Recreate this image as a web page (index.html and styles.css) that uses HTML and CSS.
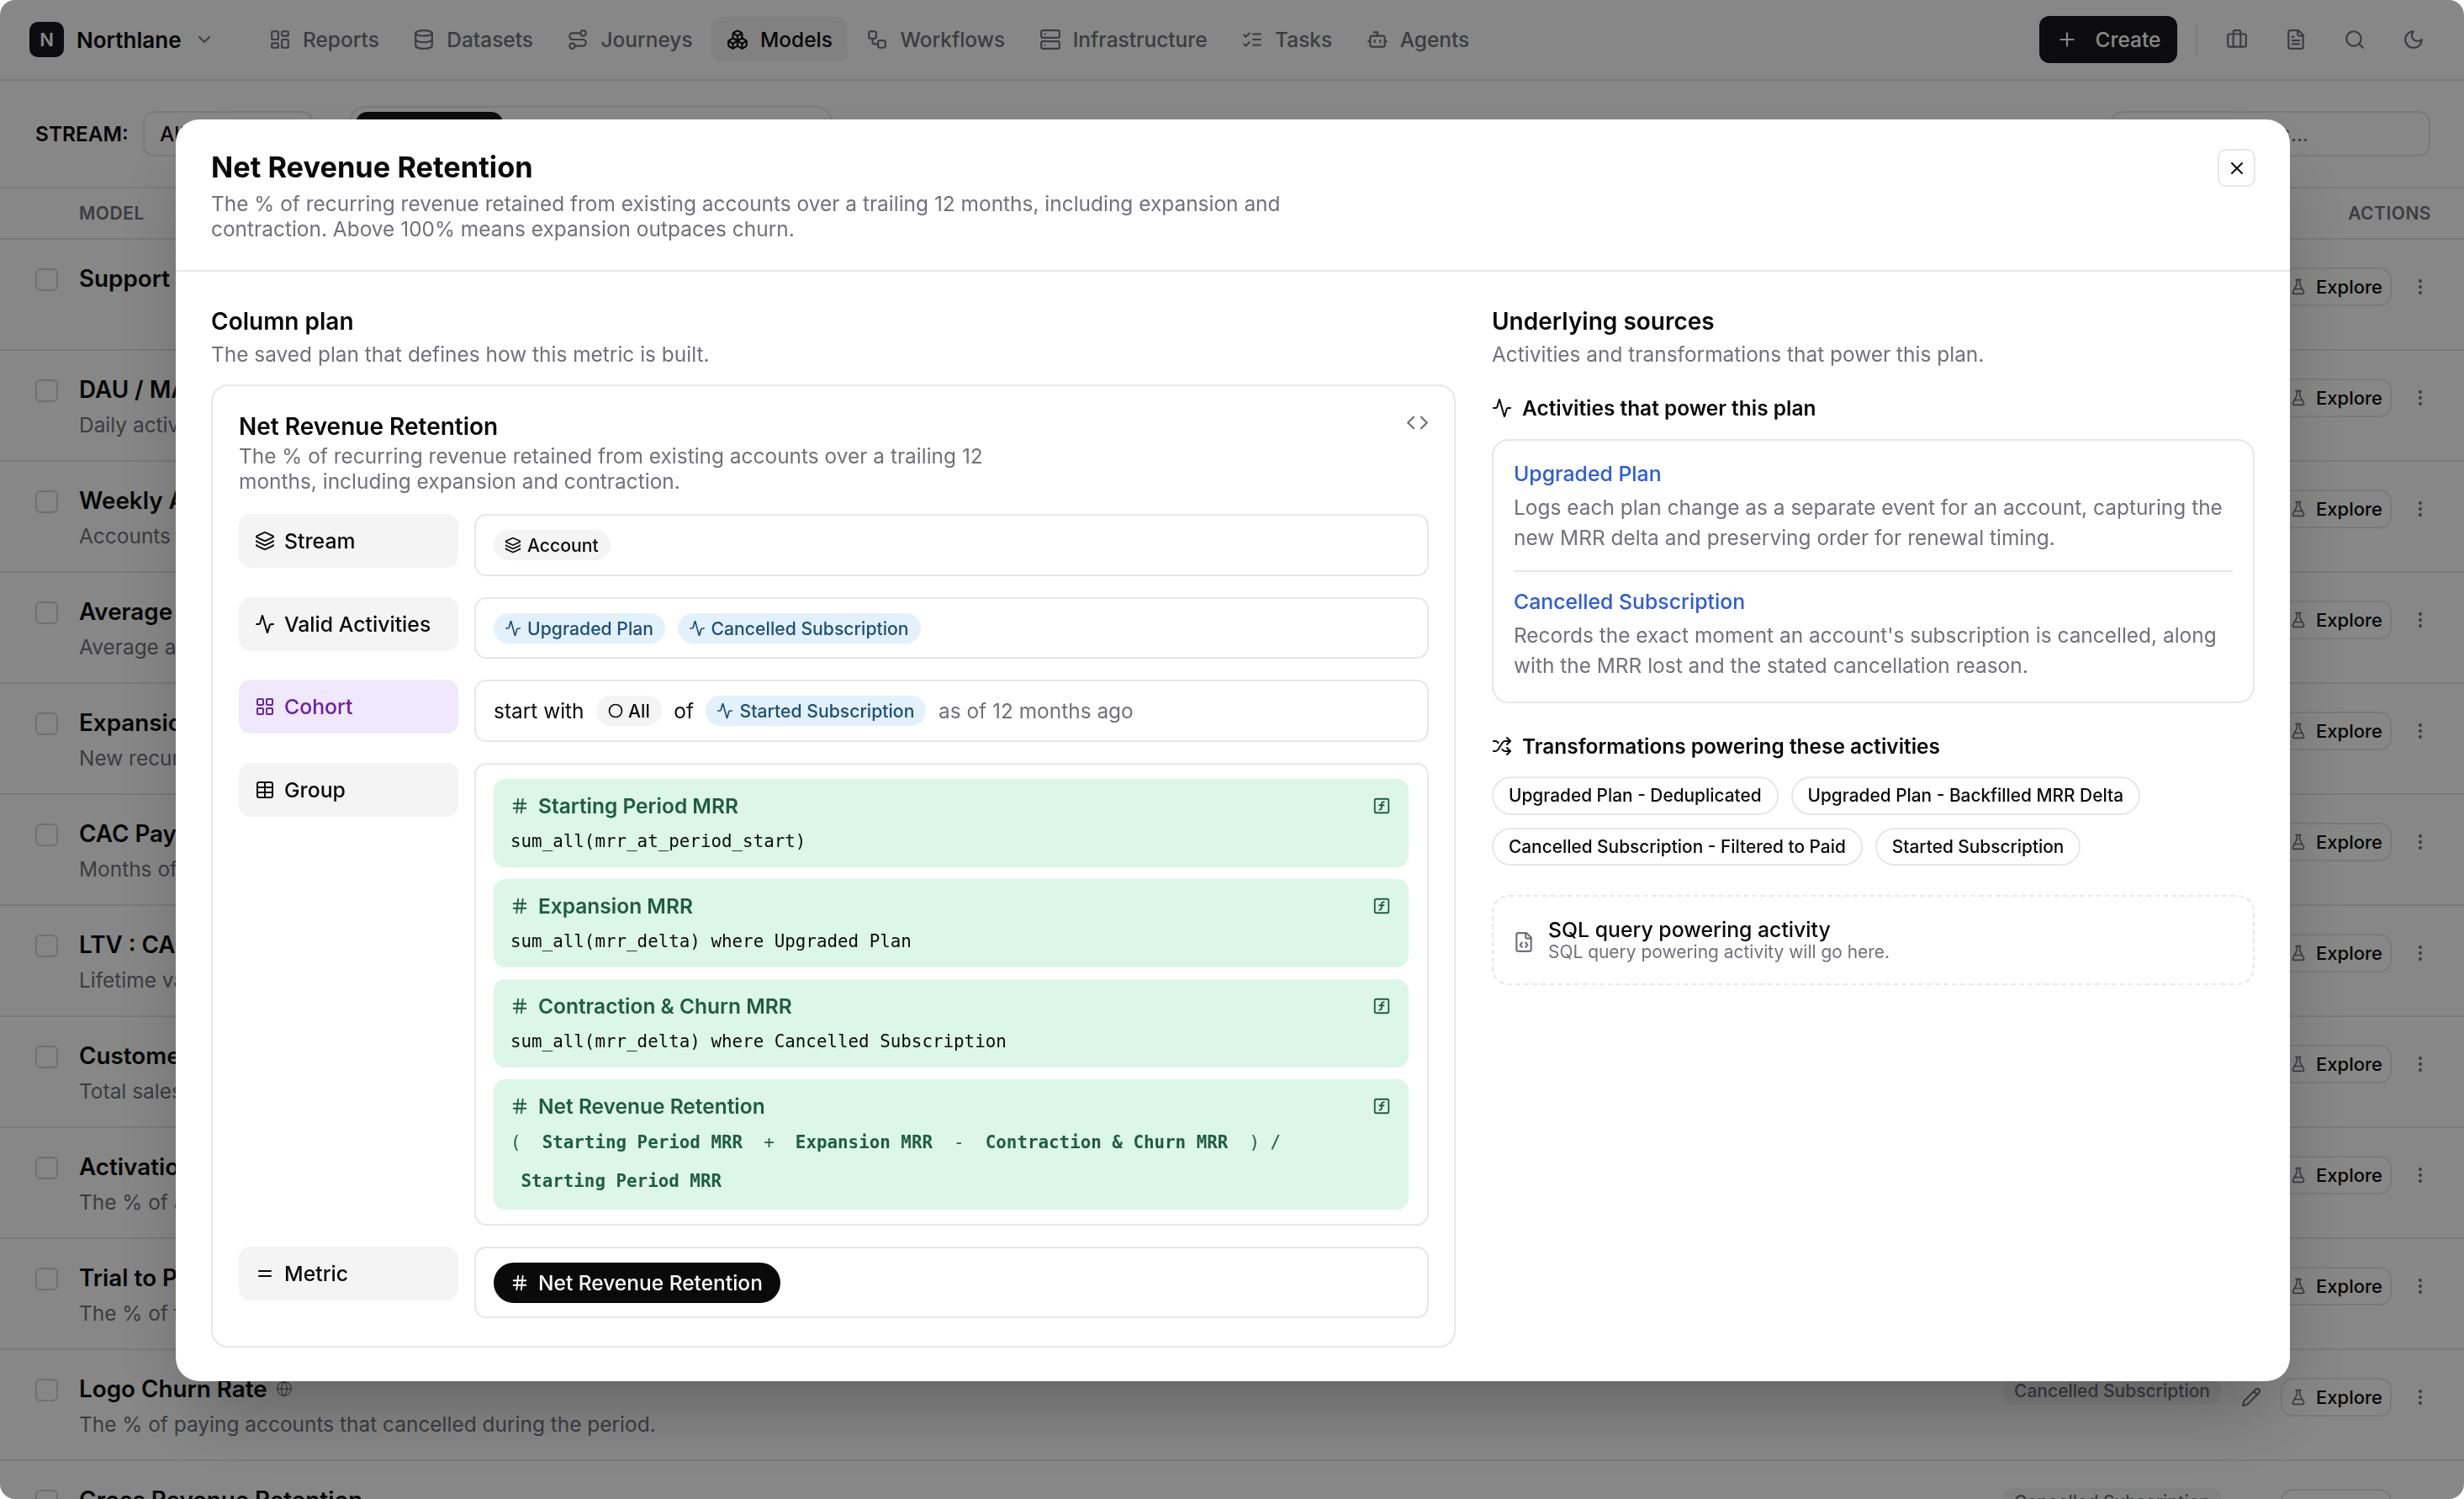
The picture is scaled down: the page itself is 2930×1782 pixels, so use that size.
FILE: index.html
```html
<!DOCTYPE html>
<html lang="en">
<head>
  <meta charset="UTF-8" />
  <meta name="viewport" content="width=device-width, initial-scale=1.0"/>
  <title>Northlane - Models</title>
  <link rel="stylesheet" href="styles.css">
</head>
<body>
  <svg class="sprite" aria-hidden="true">
    <symbol id="i-reports" viewBox="0 0 24 24"><rect width="7" height="9" x="3" y="3" rx="1"/><rect width="7" height="5" x="14" y="3" rx="1"/><rect width="7" height="9" x="14" y="12" rx="1"/><rect width="7" height="5" x="3" y="16" rx="1"/></symbol>
    <symbol id="i-grid" viewBox="0 0 24 24"><rect width="7" height="7" x="3" y="3" rx="1"/><rect width="7" height="7" x="14" y="3" rx="1"/><rect width="7" height="7" x="14" y="14" rx="1"/><rect width="7" height="7" x="3" y="14" rx="1"/></symbol>
    <symbol id="i-database" viewBox="0 0 24 24"><ellipse cx="12" cy="5" rx="9" ry="3"/><path d="M3 5V19A9 3 0 0 0 21 19V5"/><path d="M3 12A9 3 0 0 0 21 12"/></symbol>
    <symbol id="i-route" viewBox="0 0 24 24"><circle cx="6" cy="19" r="3"/><path d="M9 19h8.5a3.5 3.5 0 0 0 0-7h-11a3.5 3.5 0 0 1 0-7H15"/><circle cx="18" cy="5" r="3"/></symbol>
    <symbol id="i-boxes" viewBox="0 0 24 24"><path d="M2.97 12.92A2 2 0 0 0 2 14.63v3.24a2 2 0 0 0 .97 1.71l3 1.8a2 2 0 0 0 2.06 0L12 19v-5.5l-5-3-4.03 2.42Z"/><path d="m7 16.5-4.74-2.85"/><path d="m7 16.5 5-3"/><path d="M7 16.5v5.17"/><path d="M12 13.5V19l3.97 2.38a2 2 0 0 0 2.06 0l3-1.8a2 2 0 0 0 .97-1.71v-3.24a2 2 0 0 0-.97-1.71L17 10.5l-5 3Z"/><path d="m17 16.5-5-3"/><path d="m17 16.5 4.74-2.85"/><path d="M17 16.5v5.17"/><path d="M7.97 4.42A2 2 0 0 0 7 6.13v4.37l5 3 5-3V6.13a2 2 0 0 0-.97-1.71l-3-1.8a2 2 0 0 0-2.06 0l-3 1.8Z"/><path d="M12 8 7.26 5.15"/><path d="m12 8 4.74-2.85"/><path d="M12 13.5V8"/></symbol>
    <symbol id="i-workflow" viewBox="0 0 24 24"><rect width="8" height="8" x="3" y="3" rx="2"/><path d="M7 11v4a2 2 0 0 0 2 2h4"/><rect width="8" height="8" x="13" y="13" rx="2"/></symbol>
    <symbol id="i-server" viewBox="0 0 24 24"><rect width="20" height="8" x="2" y="2" rx="2"/><rect width="20" height="8" x="2" y="14" rx="2"/><path d="M6 6h.01"/><path d="M6 18h.01"/></symbol>
    <symbol id="i-tasks" viewBox="0 0 24 24"><path d="m3 17 2 2 4-4"/><path d="m3 7 2 2 4-4"/><path d="M13 6h8"/><path d="M13 12h8"/><path d="M13 18h8"/></symbol>
    <symbol id="i-bot" viewBox="0 0 24 24"><path d="M12 8V4H8"/><rect width="16" height="12" x="4" y="8" rx="2"/><path d="M2 14h2"/><path d="M20 14h2"/><path d="M15 13v2"/><path d="M9 13v2"/></symbol>
    <symbol id="i-plus" viewBox="0 0 24 24"><path d="M5 12h14"/><path d="M12 5v14"/></symbol>
    <symbol id="i-briefcase" viewBox="0 0 24 24"><path d="M16 20V4a2 2 0 0 0-2-2h-4a2 2 0 0 0-2 2v16"/><rect width="20" height="14" x="2" y="6" rx="2"/></symbol>
    <symbol id="i-file" viewBox="0 0 24 24"><path d="M15 2H6a2 2 0 0 0-2 2v16a2 2 0 0 0 2 2h12a2 2 0 0 0 2-2V7Z"/><path d="M14 2v4a2 2 0 0 0 2 2h4"/><path d="M10 9H8"/><path d="M16 13H8"/><path d="M16 17H8"/></symbol>
    <symbol id="i-search" viewBox="0 0 24 24"><circle cx="11" cy="11" r="8"/><path d="m21 21-4.3-4.3"/></symbol>
    <symbol id="i-moon" viewBox="0 0 24 24"><path d="M12 3a6 6 0 0 0 9 9 9 9 0 1 1-9-9Z"/></symbol>
    <symbol id="i-chevron" viewBox="0 0 24 24"><path d="m6 9 6 6 6-6"/></symbol>
    <symbol id="i-x" viewBox="0 0 24 24"><path d="M18 6 6 18"/><path d="m6 6 12 12"/></symbol>
    <symbol id="i-code" viewBox="0 0 24 24"><path d="m16 18 6-6-6-6"/><path d="m8 6-6 6 6 6"/></symbol>
    <symbol id="i-layers" viewBox="0 0 24 24"><path d="M12.83 2.18a2 2 0 0 0-1.66 0L2.6 6.08a1 1 0 0 0 0 1.83l8.58 3.91a2 2 0 0 0 1.66 0l8.58-3.9a1 1 0 0 0 0-1.83Z"/><path d="M2 12a1 1 0 0 0 .58.91l8.6 3.91a2 2 0 0 0 1.65 0l8.58-3.9A1 1 0 0 0 22 12"/><path d="M2 17a1 1 0 0 0 .58.91l8.6 3.91a2 2 0 0 0 1.65 0l8.58-3.9A1 1 0 0 0 22 17"/></symbol>
    <symbol id="i-activity" viewBox="0 0 24 24"><path d="M22 12h-2.48a2 2 0 0 0-1.93 1.46l-2.35 8.36a.25.25 0 0 1-.48 0L9.24 2.18a.25.25 0 0 0-.48 0l-2.35 8.36A2 2 0 0 1 4.49 12H2"/></symbol>
    <symbol id="i-table" viewBox="0 0 24 24"><path d="M12 3v18"/><rect width="18" height="18" x="3" y="3" rx="2"/><path d="M3 9h18"/><path d="M3 15h18"/></symbol>
    <symbol id="i-equal" viewBox="0 0 24 24"><path d="M5 9h14"/><path d="M5 15h14"/></symbol>
    <symbol id="i-hash" viewBox="0 0 24 24"><path d="M4 9h16"/><path d="M4 15h16"/><path d="M10 3 8 21"/><path d="M16 3l-2 18"/></symbol>
    <symbol id="i-function" viewBox="0 0 24 24"><rect width="18" height="18" x="3" y="3" rx="2"/><path d="M9 17c2 0 2.8-1 2.8-2.8V10c0-2 1-3.3 3.2-3"/><path d="M9 11.2h5.7"/></symbol>
    <symbol id="i-shuffle" viewBox="0 0 24 24"><path d="m18 14 4 4-4 4"/><path d="m18 2 4 4-4 4"/><path d="M2 18h1.973a4 4 0 0 0 3.3-1.7l5.454-8.6a4 4 0 0 1 3.3-1.7H22"/><path d="M2 6h1.972a4 4 0 0 1 3.398 1.89l.194.31"/><path d="M22 18h-6.041a4 4 0 0 1-3.3-1.8l-.359-.45"/></symbol>
    <symbol id="i-file-code" viewBox="0 0 24 24"><path d="M10 12.5 8 15l2 2.5"/><path d="m14 12.5 2 2.5-2 2.5"/><path d="M14 2v4a2 2 0 0 0 2 2h4"/><path d="M15 2H6a2 2 0 0 0-2 2v16a2 2 0 0 0 2 2h12a2 2 0 0 0 2-2V7z"/></symbol>
    <symbol id="i-circle" viewBox="0 0 24 24"><circle cx="12" cy="12" r="9"/></symbol>
    <symbol id="i-flask" viewBox="0 0 24 24"><path d="M14 2v6a2 2 0 0 0 .245.96l5.51 10.08A2 2 0 0 1 18 22H6a2 2 0 0 1-1.755-2.96l5.51-10.08A2 2 0 0 0 10 8V2"/><path d="M6.453 15h11.094"/><path d="M8.5 2h7"/></symbol>
    <symbol id="i-more" viewBox="0 0 24 24"><circle cx="12" cy="12" r="1"/><circle cx="12" cy="5" r="1"/><circle cx="12" cy="19" r="1"/></symbol>
    <symbol id="i-pencil" viewBox="0 0 24 24"><path d="M21.174 6.812a1 1 0 0 0-3.986-3.987L3.842 16.174a2 2 0 0 0-.5.83l-1.321 4.352a.5.5 0 0 0 .623.622l4.353-1.32a2 2 0 0 0 .83-.497z"/><path d="m15 5 4 4"/></symbol>
    <symbol id="i-globe" viewBox="0 0 24 24"><circle cx="12" cy="12" r="10"/><path d="M12 2a14.5 14.5 0 0 0 0 20 14.5 14.5 0 0 0 0-20"/><path d="M2 12h20"/></symbol>
  </svg>

  <div class="app">
    <header class="topbar">
      <div class="brand">
        <span class="brand-logo">N</span>
        <span class="brand-name">Northlane</span>
        <svg class="icon icon-sm brand-caret"><use href="#i-chevron"/></svg>
      </div>
      <nav class="nav">
        <a class="nav-item"><svg class="icon"><use href="#i-reports"/></svg>Reports</a>
        <a class="nav-item"><svg class="icon"><use href="#i-database"/></svg>Datasets</a>
        <a class="nav-item"><svg class="icon"><use href="#i-route"/></svg>Journeys</a>
        <a class="nav-item active"><svg class="icon"><use href="#i-boxes"/></svg>Models</a>
        <a class="nav-item"><svg class="icon"><use href="#i-workflow"/></svg>Workflows</a>
        <a class="nav-item"><svg class="icon"><use href="#i-server"/></svg>Infrastructure</a>
        <a class="nav-item"><svg class="icon"><use href="#i-tasks"/></svg>Tasks</a>
        <a class="nav-item"><svg class="icon"><use href="#i-bot"/></svg>Agents</a>
      </nav>
      <div class="topbar-right">
        <button class="create-btn"><svg class="icon"><use href="#i-plus"/></svg>Create</button>
        <span class="topbar-divider"></span>
        <svg class="icon top-icon"><use href="#i-briefcase"/></svg>
        <svg class="icon top-icon"><use href="#i-file"/></svg>
        <svg class="icon top-icon"><use href="#i-search"/></svg>
        <svg class="icon top-icon"><use href="#i-moon"/></svg>
      </div>
    </header>

    <div class="toolbar">
      <span class="stream-label">STREAM:</span>
      <div class="stream-select">All streams</div>
      <div class="segments">
        <span class="segment active">All models</span>
      </div>
      <div class="search">Search metrics...</div>
    </div>

    <div class="table-head">
      <span>MODEL</span>
      <span>ACTIONS</span>
    </div>

    <div class="table-row">
      <span class="check"></span>
      <div class="row-main"><div class="row-title">Support Tickets</div></div>
      <div class="row-actions"><button class="explore"><svg class="icon"><use href="#i-flask"/></svg>Explore</button><svg class="icon more"><use href="#i-more"/></svg></div>
    </div>
    <div class="table-row">
      <span class="check"></span>
      <div class="row-main"><div class="row-title">DAU / MAU</div><div class="row-sub">Daily active accounts</div></div>
      <div class="row-actions"><button class="explore"><svg class="icon"><use href="#i-flask"/></svg>Explore</button><svg class="icon more"><use href="#i-more"/></svg></div>
    </div>
    <div class="table-row">
      <span class="check"></span>
      <div class="row-main"><div class="row-title">Weekly Active</div><div class="row-sub">Accounts active each week</div></div>
      <div class="row-actions"><button class="explore"><svg class="icon"><use href="#i-flask"/></svg>Explore</button><svg class="icon more"><use href="#i-more"/></svg></div>
    </div>
    <div class="table-row">
      <span class="check"></span>
      <div class="row-main"><div class="row-title">Average Revenue</div><div class="row-sub">Average account revenue</div></div>
      <div class="row-actions"><button class="explore"><svg class="icon"><use href="#i-flask"/></svg>Explore</button><svg class="icon more"><use href="#i-more"/></svg></div>
    </div>
    <div class="table-row">
      <span class="check"></span>
      <div class="row-main"><div class="row-title">Expansion MRR</div><div class="row-sub">New recurring revenue</div></div>
      <div class="row-actions"><button class="explore"><svg class="icon"><use href="#i-flask"/></svg>Explore</button><svg class="icon more"><use href="#i-more"/></svg></div>
    </div>
    <div class="table-row">
      <span class="check"></span>
      <div class="row-main"><div class="row-title">CAC Payback</div><div class="row-sub">Months of revenue</div></div>
      <div class="row-actions"><button class="explore"><svg class="icon"><use href="#i-flask"/></svg>Explore</button><svg class="icon more"><use href="#i-more"/></svg></div>
    </div>
    <div class="table-row">
      <span class="check"></span>
      <div class="row-main"><div class="row-title">LTV : CAC</div><div class="row-sub">Lifetime value</div></div>
      <div class="row-actions"><button class="explore"><svg class="icon"><use href="#i-flask"/></svg>Explore</button><svg class="icon more"><use href="#i-more"/></svg></div>
    </div>
    <div class="table-row">
      <span class="check"></span>
      <div class="row-main"><div class="row-title">Customer Sales</div><div class="row-sub">Total sales</div></div>
      <div class="row-actions"><button class="explore"><svg class="icon"><use href="#i-flask"/></svg>Explore</button><svg class="icon more"><use href="#i-more"/></svg></div>
    </div>
    <div class="table-row">
      <span class="check"></span>
      <div class="row-main"><div class="row-title">Activation Rate</div><div class="row-sub">The % of accounts</div></div>
      <div class="row-actions"><button class="explore"><svg class="icon"><use href="#i-flask"/></svg>Explore</button><svg class="icon more"><use href="#i-more"/></svg></div>
    </div>
    <div class="table-row">
      <span class="check"></span>
      <div class="row-main"><div class="row-title">Trial to Paid</div><div class="row-sub">The % of trials</div></div>
      <div class="row-actions"><span class="row-chip">Cancelled Subscription</span><svg class="icon pencil"><use href="#i-pencil"/></svg><button class="explore"><svg class="icon"><use href="#i-flask"/></svg>Explore</button><svg class="icon more"><use href="#i-more"/></svg></div>
    </div>
    <div class="table-row">
      <span class="check"></span>
      <div class="row-main"><div class="row-title">Logo Churn Rate <svg class="icon icon-xs globe"><use href="#i-globe"/></svg></div><div class="row-sub">The % of paying accounts that cancelled during the period.</div></div>
      <div class="row-actions"><span class="row-chip">Cancelled Subscription</span><svg class="icon pencil"><use href="#i-pencil"/></svg><button class="explore"><svg class="icon"><use href="#i-flask"/></svg>Explore</button><svg class="icon more"><use href="#i-more"/></svg></div>
    </div>
    <div class="table-row">
      <span class="check"></span>
      <div class="row-main"><div class="row-title">Gross Revenue Retention</div></div>
      <div class="row-actions"><span class="row-chip">Cancelled Subscription</span><svg class="icon pencil"><use href="#i-pencil"/></svg><button class="explore"><svg class="icon"><use href="#i-flask"/></svg>Explore</button><svg class="icon more"><use href="#i-more"/></svg></div>
    </div>
  </div>

  <div class="overlay">
    <div class="modal">
      <div class="modal-head">
        <div>
          <h2 class="modal-title">Net Revenue Retention</h2>
          <p class="modal-desc">The % of recurring revenue retained from existing accounts over a trailing 12 months, including expansion and contraction. Above 100% means expansion outpaces churn.</p>
        </div>
        <button class="close-btn"><svg class="icon icon-sm"><use href="#i-x"/></svg></button>
      </div>

      <div class="modal-body">
        <section>
          <h3 class="section-title">Column plan</h3>
          <p class="section-sub">The saved plan that defines how this metric is built.</p>

          <div class="plan-card">
            <div class="plan-head">
              <div>
                <div class="plan-title">Net Revenue Retention</div>
                <p class="plan-desc">The % of recurring revenue retained from existing accounts over a trailing 12 months, including expansion and contraction.</p>
              </div>
              <svg class="icon plan-code"><use href="#i-code"/></svg>
            </div>

            <div class="plan-grid">
              <div class="plan-label"><svg class="icon icon-sm"><use href="#i-layers"/></svg>Stream</div>
              <div class="plan-value">
                <span class="chip"><svg class="icon icon-xs"><use href="#i-layers"/></svg>Account</span>
              </div>

              <div class="plan-label"><svg class="icon icon-sm"><use href="#i-activity"/></svg>Valid Activities</div>
              <div class="plan-value">
                <span class="chip chip-blue"><svg class="icon icon-xs"><use href="#i-activity"/></svg>Upgraded Plan</span>
                <span class="chip chip-blue"><svg class="icon icon-xs"><use href="#i-activity"/></svg>Cancelled Subscription</span>
              </div>

              <div class="plan-label plan-label-cohort"><svg class="icon icon-sm"><use href="#i-grid"/></svg>Cohort</div>
              <div class="plan-value">
                <span>start with</span>
                <span class="chip chip-all"><svg class="icon icon-xs"><use href="#i-circle"/></svg>All</span>
                <span>of</span>
                <span class="chip chip-blue"><svg class="icon icon-xs"><use href="#i-activity"/></svg>Started Subscription</span>
                <span class="muted">as of 12 months ago</span>
              </div>

              <div class="plan-label"><svg class="icon icon-sm"><use href="#i-table"/></svg>Group</div>
              <div class="plan-value plan-value-stack">
                <div class="calc">
                  <div class="calc-title"><svg class="icon icon-hash"><use href="#i-hash"/></svg>Starting Period MRR<svg class="icon icon-hash calc-fn"><use href="#i-function"/></svg></div>
                  <code class="calc-code">sum_all(mrr_at_period_start)</code>
                </div>
                <div class="calc">
                  <div class="calc-title"><svg class="icon icon-hash"><use href="#i-hash"/></svg>Expansion MRR<svg class="icon icon-hash calc-fn"><use href="#i-function"/></svg></div>
                  <code class="calc-code">sum_all(mrr_delta) where Upgraded Plan</code>
                </div>
                <div class="calc">
                  <div class="calc-title"><svg class="icon icon-hash"><use href="#i-hash"/></svg>Contraction &amp; Churn MRR<svg class="icon icon-hash calc-fn"><use href="#i-function"/></svg></div>
                  <code class="calc-code">sum_all(mrr_delta) where Cancelled Subscription</code>
                </div>
                <div class="calc">
                  <div class="calc-title"><svg class="icon icon-hash"><use href="#i-hash"/></svg>Net Revenue Retention<svg class="icon icon-hash calc-fn"><use href="#i-function"/></svg></div>
                  <code class="calc-code calc-formula">(  <b>Starting Period MRR</b>  +  <b>Expansion MRR</b>  -  <b>Contraction &amp; Churn MRR</b>  ) /
 <b>Starting Period MRR</b></code>
                </div>
              </div>

              <div class="plan-label"><svg class="icon icon-sm"><use href="#i-equal"/></svg>Metric</div>
              <div class="plan-value plan-value-metric">
                <span class="metric-pill"><svg class="icon icon-hash"><use href="#i-hash"/></svg>Net Revenue Retention</span>
              </div>
            </div>
          </div>
        </section>

        <section>
          <h3 class="section-title">Underlying sources</h3>
          <p class="section-sub">Activities and transformations that power this plan.</p>

          <h4 class="sub-head sub-head-first"><svg class="icon icon-sm"><use href="#i-activity"/></svg>Activities that power this plan</h4>
          <div class="source-card">
            <div class="source">
              <a class="source-name">Upgraded Plan</a>
              <p class="source-desc">Logs each plan change as a separate event for an account, capturing the new MRR delta and preserving order for renewal timing.</p>
            </div>
            <div class="source">
              <a class="source-name">Cancelled Subscription</a>
              <p class="source-desc">Records the exact moment an account's subscription is cancelled, along with the MRR lost and the stated cancellation reason.</p>
            </div>
          </div>

          <h4 class="sub-head"><svg class="icon icon-sm"><use href="#i-shuffle"/></svg>Transformations powering these activities</h4>
          <div class="tags">
            <span class="tag">Upgraded Plan - Deduplicated</span>
            <span class="tag">Upgraded Plan - Backfilled MRR Delta</span>
            <span class="tag">Cancelled Subscription - Filtered to Paid</span>
            <span class="tag">Started Subscription</span>
          </div>

          <div class="sql-box">
            <svg class="icon"><use href="#i-file-code"/></svg>
            <div>
              <div class="sql-title">SQL query powering activity</div>
              <div class="sql-sub">SQL query powering activity will go here.</div>
            </div>
          </div>
        </section>
      </div>
    </div>
  </div>
</body>
</html>
```

FILE: styles.css
```css
:root {
  --ink: #0a0a0b;
  --muted: #71717a;
  --line: #e7e7e9;
  --soft: #f4f4f5;
  --green: #dcf7e7;
  --green-ink: #1f5c43;
}

* {
  box-sizing: border-box;
}

html, body {
  margin: 0;
  height: 100%;
  background: #fff;
}

body {
  font-family: Inter, "Noto Sans", sans-serif;
  font-size: 24.45px;
  color: var(--ink);
  overflow: hidden;
}

h2, h3, h4, p {
  margin: 0;
  font-weight: inherit;
}

button {
  font: inherit;
  color: inherit;
  background: none;
  border: 0;
  padding: 0;
}

.sprite {
  display: none;
}

.icon {
  width: 26px;
  height: 26px;
  flex: none;
  fill: none;
  stroke: currentColor;
  stroke-width: 2;
  stroke-linecap: round;
  stroke-linejoin: round;
}

.icon-sm {
  width: 24px;
  height: 24px;
}

.icon-hash {
  width: 22px;
  height: 22px;
}

.icon-xs {
  width: 20px;
  height: 20px;
}

/* background page */

.topbar {
  height: 96px;
  display: flex;
  align-items: center;
  padding: 0 47px 0 35px;
  border-bottom: 2px solid var(--line);
}

.brand {
  display: flex;
  align-items: center;
  gap: 15px;
  width: 267px;
}

.brand-logo {
  width: 41px;
  height: 42px;
  border-radius: 10px;
  background: #18181b;
  color: #fff;
  display: flex;
  align-items: center;
  justify-content: center;
  font-size: 22px;
  font-weight: 600;
}

.brand-name {
  font-size: 26px;
  font-weight: 600;
}

.brand-caret {
  color: var(--muted);
}

.nav {
  display: flex;
  align-items: center;
  gap: 4.5px;
}

.nav-item {
  height: 54px;
  padding: 0 18px;
  display: flex;
  align-items: center;
  gap: 14px;
  border-radius: 14px;
  font-weight: 500;
  color: var(--muted);
}

.nav-item.active {
  background: var(--soft);
  color: var(--ink);
}

.topbar-right {
  margin-left: auto;
  display: flex;
  align-items: center;
}

.create-btn {
  width: 164px;
  height: 56px;
  border-radius: 12px;
  background: #18181b;
  color: #fff;
  font-weight: 500;
  display: flex;
  align-items: center;
  justify-content: center;
  gap: 21px;
}

.topbar-divider {
  width: 2px;
  height: 38px;
  background: var(--line);
  margin: 0 34px 0 22px;
}

.top-icon {
  color: var(--muted);
  margin-left: 44px;
}

.topbar-divider + .top-icon {
  margin-left: 0;
}

.toolbar {
  height: 128px;
  display: flex;
  align-items: center;
  padding: 0 40px 0 42px;
  border-bottom: 2px solid var(--line);
}

.stream-label {
  font-weight: 600;
  width: 128px;
  flex: none;
}

.stream-select {
  width: 203px;
  height: 54px;
  padding: 0 18px;
  display: flex;
  align-items: center;
  border: 2px solid var(--line);
  border-radius: 14px;
  font-weight: 500;
}

.segments {
  width: 575px;
  height: 66px;
  margin-left: 42px;
  padding: 5px 6px;
  border: 2px solid var(--line);
  border-radius: 20px;
}

.segment.active {
  width: 175px;
  height: 52px;
  display: block;
  border-radius: 14px;
  background: #18181b;
  color: #fff;
  text-align: center;
  line-height: 52px;
}

.search {
  margin-left: auto;
  width: 380px;
  height: 54px;
  padding: 0 38px;
  display: flex;
  align-items: center;
  border: 2px solid var(--line);
  border-radius: 14px;
  color: var(--muted);
}

.table-head {
  height: 61px;
  display: flex;
  align-items: center;
  justify-content: space-between;
  padding: 0 39px 0 94px;
  border-bottom: 2px solid var(--line);
  font-size: 21px;
  font-weight: 600;
  letter-spacing: 0.5px;
  color: var(--muted);
}

.table-row {
  height: 132px;
  display: flex;
  align-items: flex-start;
  padding: 33px 40px 0 42px;
  border-bottom: 2px solid var(--line);
}

.check {
  width: 27px;
  height: 27px;
  margin-top: 1px;
  border: 2px solid #d4d4d8;
  border-radius: 6px;
  flex: none;
}

.row-main {
  margin: -5px 0 0 25px;
}

.row-title {
  font-size: 27.8px;
  line-height: 36px;
  font-weight: 600;
  display: flex;
  align-items: center;
  gap: 10px;
}

.globe {
  color: var(--muted);
  stroke-width: 1.5;
}

.row-sub {
  margin-top: 6px;
  line-height: 36px;
  color: var(--muted);
}

.row-actions {
  margin-left: auto;
  display: flex;
  align-items: flex-start;
}

.row-chip {
  margin-top: -1px;
  height: 33px;
  padding: 0 13px;
  display: flex;
  align-items: center;
  border-radius: 12px;
  background: var(--soft);
  font-size: 21px;
  font-weight: 500;
  color: var(--muted);
}

.pencil {
  width: 24px;
  height: 24px;
  margin: 11px 23px 0 24px;
  color: var(--muted);
}

.explore {
  width: 132px;
  height: 46px;
  display: flex;
  align-items: center;
  justify-content: center;
  gap: 11px;
  border: 2px solid var(--line);
  border-radius: 14px;
  font-size: 22px;
  font-weight: 500;
}

.explore .icon {
  width: 20px;
  height: 20px;
  color: var(--muted);
}

.more {
  width: 24px;
  height: 24px;
  margin: 11px 0 0 22px;
  color: var(--muted);
}

/* modal */

.overlay {
  position: fixed;
  inset: 0;
  padding: 2px 0 0 2px;
  display: flex;
  align-items: center;
  justify-content: center;
  background: rgba(0, 0, 0, 0.47);
  border-radius: 18px;
}

.modal {
  width: 2514px;
  height: 1500px;
  background: #fff;
  border-radius: 28px;
  box-shadow: 0 46px 92px -22px rgba(0, 0, 0, 0.3);
  display: flex;
  flex-direction: column;
}

.modal-head {
  height: 181px;
  padding: 34px 41px 0 42px;
  display: flex;
  justify-content: space-between;
  align-items: flex-start;
  border-bottom: 2px solid var(--line);
}

.modal-title {
  font-size: 34.4px;
  line-height: 46px;
  font-weight: 700;
}

.modal-desc {
  width: 1300px;
  margin-top: 5px;
  line-height: 30px;
  color: var(--muted);
}

.close-btn {
  width: 45px;
  height: 45px;
  display: flex;
  align-items: center;
  justify-content: center;
  border: 2px solid var(--line);
  border-radius: 10px;
  margin-top: 1px;
}

.modal-body {
  flex: 1;
  padding: 40px 41px 0 42px;
  display: grid;
  grid-template-columns: 1480px 907px;
  gap: 43px;
  align-items: start;
}

.section-title {
  font-size: 28px;
  line-height: 38px;
  font-weight: 600;
}

.section-sub {
  margin-top: 2px;
  line-height: 36px;
  color: var(--muted);
}

.plan-card {
  margin-top: 18px;
  padding: 33px 32px 33px 31px;
  border: 2px solid var(--line);
  border-radius: 20px;
}

.plan-head {
  height: 119px;
  display: flex;
  justify-content: space-between;
  align-items: flex-start;
}

.plan-title {
  font-size: 28px;
  line-height: 30px;
  font-weight: 600;
}

.plan-desc {
  width: 900px;
  margin-top: 6px;
  line-height: 29.5px;
  color: var(--muted);
}

.plan-code {
  width: 27px;
  height: 27px;
  margin: -3px -2px 0 0;
  color: var(--muted);
}

.plan-grid {
  display: grid;
  grid-template-columns: 261px 1135px;
  gap: 25px 19px;
  align-items: start;
}

.plan-label {
  height: 64px;
  padding: 0 19px;
  display: flex;
  align-items: center;
  gap: 11px;
  border-radius: 14px;
  background: var(--soft);
  font-size: 24.8px;
  font-weight: 500;
  white-space: nowrap;
}

.plan-label-cohort {
  background: #f0e8fc;
  color: #6b21a8;
}

.plan-value {
  min-height: 73.7px;
  padding: 16px 21px;
  display: flex;
  align-items: center;
  gap: 14.5px;
  border: 2px solid var(--line);
  border-radius: 14px;
}

.muted {
  color: var(--muted);
}

.chip {
  height: 36px;
  padding: 0 14px 0 13px;
  display: inline-flex;
  align-items: center;
  gap: 7px;
  border-radius: 18px;
  background: var(--soft);
  font-size: 21.2px;
  font-weight: 500;
}

.chip-all {
  gap: 5px;
}

.chip-blue {
  background: #e3f1fd;
  color: #1e4e79;
}

.plan-value-stack {
  flex-direction: column;
  align-items: stretch;
  gap: 14px;
  padding: 17px 22px 17px 21px;
}

.plan-value-metric {
  padding: 16.5px 21px;
}

.calc {
  padding: 16px 21px 16px 20px;
  border-radius: 14px;
  background: var(--green);
}

.calc-title {
  display: flex;
  align-items: center;
  gap: 11px;
  font-size: 24.5px;
  line-height: 32px;
  font-weight: 600;
  color: var(--green-ink);
}

.calc-fn {
  margin-left: auto;
}

.calc-code {
  display: block;
  margin-top: 11px;
  font-family: "DejaVu Sans Mono", monospace;
  font-size: 20.85px;
  line-height: 30px;
  white-space: pre;
}

.calc-formula {
  margin: 4px 0 -5px;
  line-height: 46px;
  color: var(--green-ink);
}

.calc-formula b {
  font-weight: 600;
}

.metric-pill {
  height: 48px;
  padding: 0 21px 0 20px;
  display: inline-flex;
  align-items: center;
  gap: 11px;
  border-radius: 24px;
  background: var(--ink);
  color: #fff;
  font-size: 24.5px;
  font-weight: 500;
}

.sub-head {
  display: flex;
  align-items: center;
  gap: 12px;
  margin-top: 33px;
  line-height: 36px;
  font-weight: 600;
}

.sub-head-first {
  margin-top: 28px;
}

.source-card {
  margin-top: 19px;
  padding: 21px 24px 0;
  height: 314px;
  border: 2px solid var(--line);
  border-radius: 20px;
}

.source + .source {
  margin-top: 21px;
  padding-top: 17px;
  border-top: 2px solid var(--line);
}

.source-name {
  display: block;
  font-size: 24.8px;
  line-height: 36px;
  font-weight: 500;
  color: #2b5ce0;
}

.source-desc {
  margin-top: 4px;
  line-height: 36px;
  color: var(--muted);
}

.tags {
  margin-top: 18px;
  display: flex;
  flex-wrap: wrap;
  gap: 15px;
}

.tag {
  height: 45.5px;
  padding: 0 18px;
  display: flex;
  align-items: center;
  border: 2px solid var(--line);
  border-radius: 23px;
  font-size: 20.85px;
  font-weight: 500;
}

.sql-box {
  margin-top: 35px;
  height: 107px;
  padding: 0 23px;
  display: flex;
  align-items: center;
  gap: 16px;
  border: 2px dashed var(--line);
  border-radius: 20px;
}

.sql-box .icon {
  color: var(--muted);
  margin-top: 4px;
}

.sql-title {
  font-size: 24.8px;
  line-height: 28px;
  font-weight: 500;
}

.sql-sub {
  font-size: 20.95px;
  line-height: 26px;
  color: var(--muted);
}
```
